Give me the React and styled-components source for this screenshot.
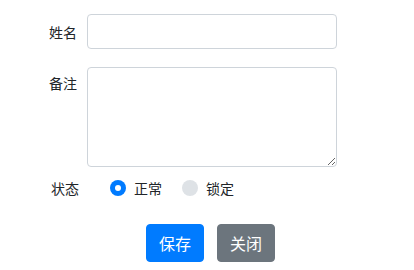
import styled, { createGlobalStyle } from 'styled-components';

const GlobalStyle = createGlobalStyle`
  body {
    margin: 0;
    background: #fff;
    font-family: 'Noto Sans CJK SC', 'Microsoft YaHei', sans-serif;
    color: #212529;
  }
`;

const App = () => {
  return (
    <>
      <GlobalStyle />
      <Form>
        <Row align='center'>
          <Label>姓名</Label>
          <Input type='text' />
        </Row>
        <Row align='start' gap={18}>
          <Label top={5}>备注</Label>
          <TextArea />
        </Row>
        <StatusRow>
          <StatusLabel>状态</StatusLabel>
          <RadioGroup>
            <RadioItem>
              <Radio checked />
              <span>正常</span>
            </RadioItem>
            <RadioItem>
              <Radio />
              <span>锁定</span>
            </RadioItem>
          </RadioGroup>
        </StatusRow>
        <Buttons>
          <Button variant='primary'>保存</Button>
          <Button variant='secondary'>关闭</Button>
        </Buttons>
      </Form>
    </>
  );
};

export default App;

const Form = styled.form`
  display: flex;
  flex-direction: column;
  padding-top: 14px;
`;

const Row = styled.div`
  display: grid;
  grid-template-columns: 77px 250px;
  column-gap: 10px;
  align-items: ${(p) => p.align};
  margin-top: ${(p) => p.gap || 0}px;
`;

const Label = styled.label`
  font-size: 14px;
  line-height: 22px;
  text-align: right;
  padding-top: ${(p) => p.top || 0}px;
`;

const StatusLabel = styled(Label)`
  width: 79px;
  flex: none;
`;

const Input = styled.input`
  box-sizing: border-box;
  height: 35px;
  width: 100%;
  border: 1px solid #ced4da;
  border-radius: 4px;
  padding: 6px 12px;
  font-size: 14px;
  outline: none;
`;

const TextArea = styled.textarea`
  box-sizing: border-box;
  height: 100px;
  width: 100%;
  margin: 0;
  border: 1px solid #ced4da;
  border-radius: 4px;
  padding: 6px 12px;
  font-size: 14px;
  font-family: inherit;
  resize: vertical;
  outline: none;
`;

const StatusRow = styled.div`
  display: flex;
  align-items: center;
  margin-top: 10px;
  height: 22px;
`;

const RadioGroup = styled.div`
  display: flex;
  align-items: center;
  gap: 20px;
  margin-left: 31px;
`;

const RadioItem = styled.div`
  display: flex;
  align-items: center;
  gap: 8px;
  font-size: 14px;
  line-height: 22px;
`;

const Radio = styled.span`
  box-sizing: border-box;
  width: 16px;
  height: 16px;
  border-radius: 50%;
  background: ${(p) => (p.checked ? '#007bff' : '#dee2e6')};
  display: flex;
  align-items: center;
  justify-content: center;

  &::after {
    content: '';
    display: ${(p) => (p.checked ? 'block' : 'none')};
    width: 6px;
    height: 6px;
    border-radius: 50%;
    background: #fff;
  }
`;

const Buttons = styled.div`
  display: flex;
  gap: 13px;
  margin-top: 25px;
  padding-left: 146px;
`;

const Button = styled.button`
  box-sizing: border-box;
  height: 38px;
  padding: 0 12px;
  border: 1px solid
    ${(p) => (p.variant === 'primary' ? '#007bff' : '#6c757d')};
  border-radius: 4px;
  background: ${(p) => (p.variant === 'primary' ? '#007bff' : '#6c757d')};
  color: #fff;
  font-size: 16px;
  font-family: inherit;
  line-height: 24px;
  cursor: pointer;
`;
